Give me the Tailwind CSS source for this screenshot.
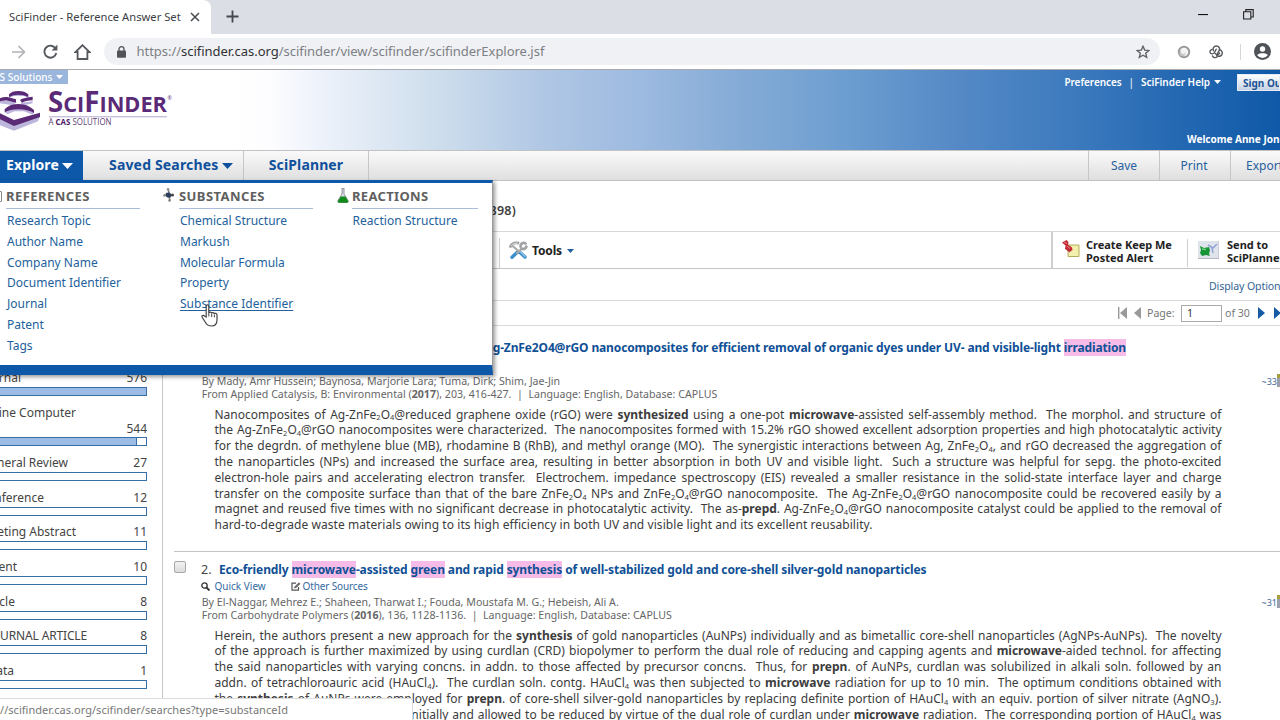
<!DOCTYPE html>
<html lang="en">
<head>
<meta charset="utf-8">
<title>SciFinder - Reference Answer Set</title>
<script src="https://cdn.jsdelivr.net/npm/@tailwindcss/browser@4"></script>
</head>
<body class="relative flex h-[720px] w-[1280px] flex-col overflow-hidden bg-white font-['Noto_Sans',sans-serif] text-xs text-[#444] whitespace-nowrap">

<!-- Browser tabs -->
<div class="flex h-[34px] shrink-0 bg-[#dcdee6]">
  <div class="flex w-[211px] items-center rounded-tr-lg bg-white pl-[9px]">
    <span class="w-[179px] text-[11.2px] tracking-[0.01px] text-[#3c4043]">SciFinder - Reference Answer Set</span>
    <svg class="ml-[2px] h-2.5 w-2.5" viewBox="0 0 10 10" stroke="#45484c" stroke-width="1.5"><path d="M1 1l8 8M9 1l-8 8"/></svg>
  </div>
  <svg class="mt-[10px] ml-[15px] h-[13px] w-[13px]" viewBox="0 0 13 13" stroke="#44474b" stroke-width="1.8"><path d="M6.5 .5v12M.5 6.5h12"/></svg>
  <svg class="mt-[14px] ml-auto h-[2px] w-[10px]" viewBox="0 0 10 2"><path d="M0 .5h10" stroke="#111" stroke-width="1.2"/></svg>
  <svg class="mt-[9px] mr-[26px] ml-[35px] h-[11px] w-[11px]" viewBox="0 0 11 11" fill="none" stroke="#222" stroke-width="1.1"><path d="M.6 2.8h7.2v7.2H.6zM2.8 2.8V.6h7.4v7.4H7.8"/></svg>
</div>

<!-- Address bar -->
<div class="flex h-9 shrink-0 items-center border-b border-[#a9abb0] bg-white">
  <svg class="ml-[11px] h-[14px] w-[15px]" viewBox="0 0 15 14" fill="none" stroke="#b0b2b6" stroke-width="1.6"><path d="M1 7h12.5M7.5 1l6 6-6 6"/></svg>
  <svg class="ml-[17px] h-[15px] w-[15px]" viewBox="0 0 15 15"><path d="M12.600 4.600A6 6 0 1 0 13.300 9" fill="none" stroke="#55585c" stroke-width="1.900"/><path d="M14.400 .6v6H8.600z" fill="#55585c"/></svg>
  <svg class="ml-[15.500px] h-4 w-[17px]" viewBox="0 0 17 16" fill="none" stroke="#55585c" stroke-width="1.800"><path d="M8.500 1.200L1.600 8h2v7h9.800V8h2z"/></svg>
  <div class="ml-[13.500px] flex h-[27px] w-[1056px] items-center rounded-full bg-[#f0f1f4] pr-[10px] pl-[13px]">
    <svg class="h-3 w-[9px]" viewBox="0 0 9 12"><rect y="4.400" width="9" height="7.400" rx="1" fill="#505357"/><path d="M2 5V3.200a2.500 2.500 0 0 1 5 0V5" fill="none" stroke="#505357" stroke-width="1.300"/></svg>
    <span class="ml-[10.500px] text-[13px] tracking-[-0.030px] text-[#7c7f84]">https://<span class="text-[#303236]">scifinder.cas.org</span>/scifinder/view/scifinder/scifinderExplore.jsf</span>
    <svg class="ml-auto h-[14px] w-[14px]" viewBox="0 0 14 14" fill="none" stroke="#606368" stroke-width="1.400"><path d="M7 1.300l1.700 3.800 4.200.4-3.200 2.800 1 4.100L7 10.200l-3.700 2.200 1-4.100L1.100 5.500l4.200-.4z"/></svg>
  </div>
  <svg class="ml-[17px] h-[14px] w-[14px]" viewBox="0 0 14 14"><circle cx="7" cy="7" r="5.200" fill="#f8f8f8" stroke="#9a9a9a" stroke-width="2"/><circle cx="5.500" cy="8.300" r="3" fill="#c6c6c6"/><circle cx="6.200" cy="6.800" r="2.300" fill="#f2f2f2"/></svg>
  <svg class="ml-[18px] h-[14px] w-[14px]" viewBox="0 0 14 14" fill="none" stroke="#54575b" stroke-width="1.400" stroke-linecap="round"><path d="M4.500 5.800C3.200 3 5 1 7.300 1s4 2 3 4.200L8.600 8.300"/><path d="M7.200 4.200L5.500 7.500C4.300 9.500 1.500 9.300 1 7.300c-.3-1.500.8-2.600 2-2.800"/><path d="M3.500 11c.6 1.800 3.600 2.300 4.900.3M6.200 8.400c1 1.600 3.600 1.600 4.400-.4M10.800 4.800c2.300.6 3.200 3.200 1.800 5.200-1.300 1.800-3.800 1.600-4.900.2"/></svg>
  <div class="ml-[17px] h-4 w-px bg-[#d4d6da]"></div>
  <svg class="ml-[13px] h-[17px] w-[17px]" viewBox="0 0 17 17"><circle cx="8.500" cy="8.500" r="8.500" fill="#4f5256"/><circle cx="8.500" cy="6" r="2.700" fill="#fff"/><path d="M3.200 12.300c1-2.600 9.600-2.600 10.600 0a6.600 6.600 0 0 1-10.600 0z" fill="#fff"/></svg>
</div>

<!-- Banner -->
<header class="flex h-20 shrink-0 justify-between overflow-hidden bg-[linear-gradient(90deg,#fff_230px,#fdfdff_270px,#ecf1fa_325px,#cdddec_440px,#b1c8e5_540px,#9dbae0_640px,#84abd6_740px,#6c9dd0_850px,#5489c6_960px,#3b79bd_1080px,#2468b2_1180px,#0f59a8_1280px)]">
  <div class="flex flex-col">
    <div class="flex h-[14px] w-[68px] items-center justify-end bg-[#9ab6dc] pr-[5px] text-[10px] leading-none font-medium tracking-[0.040px] text-white">CAS Solutions
      <svg class="ml-[3.500px] h-1 w-[7px] shrink-0" viewBox="0 0 7 4"><path d="M0 0h7L3.500 4z" fill="#fff"/></svg>
    </div>
    <svg class="mt-[4px] h-[44px] w-[180px]" viewBox="0 0 180 44">
      <g transform="translate(0 -20) scale(.33333)">
        <g fill="#bdb6dc">
          <path d="M28 80l12-6h32l12 6v10l-12-6H40l-12 7zM0 99l14-3 34 8-10 8-38-6zM62 104l36-4v6l-32 7zM14 132l30-14h28l30 14-4 8-26-10H44l-22 9z"/>
          <path d="M0 154l42 18 78-28-6 16-72 28-42-16z"/>
        </g>
        <g fill="#5a2a77">
          <path d="M27 79q8-10 28-10t30 10v8q-16-7-30-7t-28 7z"/>
          <path d="M0 91q10-5 22-4l26 7v10l-30-7-18 3zM60 96q12-8 38-10v11q-22 1-32 7z"/>
          <path d="M14 124q14-16 42-16t46 18v9q-20-11-46-11t-42 9z"/>
          <path d="M0 136l42 20 78-22v13l-78 27-42-20z"/>
        </g>
      </g>
      <text x="48" y="24" textLength="119" lengthAdjust="spacingAndGlyphs" font-family="Open Sans, sans-serif" fill="#5a2a77" font-size="22" font-weight="700"><tspan font-size="28">S</tspan>CI<tspan font-size="28">F</tspan>INDER</text>
      <text x="167.500" y="12" font-family="Open Sans, sans-serif" font-size="5" fill="#5a2a77">®</text>
      <path d="M49 28.800h118" stroke="#b3a9cc" stroke-width="1"/>
      <text x="48.500" y="37.400" textLength="63" lengthAdjust="spacingAndGlyphs" font-family="Open Sans, sans-serif" font-size="8.500" fill="#5d4472">A <tspan font-weight="700" fill="#4b2168">CAS</tspan> SOLUTION</text>
    </svg>
  </div>
  <div class="flex flex-col justify-between pt-[4px] pb-[4px] text-white">
    <div class="flex h-[17px] items-center text-[10px] leading-none font-semibold">
      <span class="mb-[2px] w-[57px] tracking-[-0.050px]">Preferences</span>
      <span class="mr-[7px] mb-[2px] ml-[7px] font-normal">|</span>
      <span class="mb-[2px] tracking-[-0.030px]">SciFinder Help</span>
      <svg class="ml-[4px] mb-[2px] h-1 w-[7px]" viewBox="0 0 7 4"><path d="M0 0h7L3.500 4z" fill="#fff"/></svg>
      <div class="ml-[16px] flex h-[17px] w-[43px] items-center overflow-hidden border border-[#e6ecf5] bg-linear-to-b from-white to-[#c6d2e4] pl-[5px] text-[10px] font-bold text-[#1e5494]">Sign Out</div>
    </div>
    <div class="ml-auto w-[93px] overflow-hidden text-[10px] leading-[14px] font-bold tracking-[-0.020px]">Welcome Anne Jones</div>
  </div>
</header>

<!-- Main navigation -->
<nav class="flex h-[31px] shrink-0 items-stretch border-t border-b border-[#c2c2c2] bg-linear-to-b from-[#fafafa] to-[#dfdfdf] text-[14px] font-bold tracking-[0.130px] text-[#0f519c]">
  <div class="flex w-[83px] items-center bg-[#0d58a9] pl-[6px] text-white">Explore
    <svg class="ml-[3px] h-[6px] w-[11px]" viewBox="0 0 11 6"><path d="M0 0h11L5.500 6z" fill="#fff"/></svg>
  </div>
  <div class="flex w-[161px] items-center border-r border-[#c6c6c6] pl-[26px] tracking-[0.170px]">Saved Searches
    <svg class="ml-[4px] h-[6px] w-[11px]" viewBox="0 0 11 6"><path d="M0 0h11L5.500 6z" fill="#0f519c"/></svg>
  </div>
  <div class="flex w-[125px] items-center justify-center border-r border-[#c6c6c6]">SciPlanner</div>
  <div class="ml-auto flex text-xs font-normal tracking-normal text-[#27609f]">
    <div class="flex w-[71px] items-center justify-center border-l border-[#c6c6c6]">Save</div>
    <div class="flex w-[71px] items-center justify-center border-l border-[#c6c6c6] pr-[2px]">Print</div>
    <div class="flex w-[50px] items-center overflow-hidden border-l border-[#c6c6c6] pl-[15px]">Export</div>
  </div>
</nav>

<!-- Answer set heading -->
<div class="flex h-[51px] shrink-0 items-center border-b border-[#d8d8d8] pt-[10px]">
  <div class="w-[516px] text-right text-[12.500px] font-semibold tracking-[0.250px] text-[#3d3d3d]">References (898)</div>
</div>

<!-- Tool bar -->
<div class="flex h-[37px] shrink-0 items-stretch border-b border-[#c4c4c4] text-[11px] leading-[13px] font-bold text-[#222]">
  <div class="mt-[6px] ml-[499px] flex items-center border-l border-[#cfcfcf] pb-[5px] pl-[9px]">
    <svg class="h-[19px] w-[19px]" viewBox="0 0 19 19" fill="none" stroke-linecap="round">
      <path d="M10 10.500l6 5.500M9 10.500L3 16.300" stroke="#3c8ecb" stroke-width="3.400"/><path d="M10.500 10l5.500 5.500" stroke="#8cc4ea" stroke-width="1.300"/>
      <path d="M3 4.500l7 6M12 8.500l-4 3.500" stroke="#aaa" stroke-width="2.200"/>
      <path d="M1.500 5.500c1-2.500 4-4 7.500-3.500M11.500 5.500c0-3 3-4.500 5-3M12.500 7.500c2 1.200 4.300.2 4.800-1.800" stroke="#a0a3a5" stroke-width="2.800"/>
      <path d="M2.500 4.500c1.500-1.800 3.500-2.300 5.500-2.200" stroke="#ddd" stroke-width="1"/>
    </svg>
    <span class="ml-[4px] text-xs tracking-[-0.150px]">Tools</span>
    <svg class="ml-[5px] h-1 w-[7px]" viewBox="0 0 7 4"><path d="M0 0h7L3.500 4z" fill="#24619f"/></svg>
  </div>
  <div class="ml-auto flex w-[136px] items-center border-l-2 border-[#cfcfcf] pl-[9px]">
    <svg class="mt-[-2px] h-[18px] w-[18px]" viewBox="0 0 18 18"><path d="M6 5h11v11.500H6z" fill="#f3efac" stroke="#b5ad5e"/><path d="M8 12l-2-2" stroke="#666" stroke-width="1.200"/><path d="M0 2.500L4.500 0l2 2-.5 2.500 4 3 .5 2.500-3 2L3 9l.5-3.500z" fill="#c22b36"/><path d="M2 2l3 1.500M5 6l3 2.500" stroke="#ee8288"/></svg>
    <div class="ml-[6px] pt-[2px] tracking-[-0.030px]">Create Keep Me<br>Posted Alert</div>
  </div>
  <div class="mt-[7px] mb-px h-auto w-px bg-[#cfcfcf]"></div>
  <div class="flex w-[92px] items-center overflow-hidden pl-[10px]">
    <svg class="h-[18px] w-[21px] shrink-0" viewBox="0 0 21 18"><path d="M0 0h21v17.500H0z" fill="#dfe3ea"/><path d="M0 17.500h21V0" fill="none" stroke="#b4b8bf"/><path d="M10 4l5 3 4-4M14 7l1 5" fill="none" stroke="#93a3d6" stroke-width="1.500"/><path d="M2 5l4 2 5-1 1 3-1 4 1 2-4-1-4 1-2-3 1-3z" fill="#189436"/><path d="M4 8l4 .5" stroke="#68d07e" stroke-width="1.500"/></svg>
    <div class="ml-[8px] pt-[2px]">Send to<br>SciPlanner</div>
  </div>
</div>
<div class="flex h-8 shrink-0 items-center justify-end border-b border-[#dadada] pt-[3px] text-[#336496]"><span class="w-[71px] overflow-hidden text-[10.600px] tracking-[-0.120px]">Display Options</span></div>
<div class="flex h-[25px] shrink-0 items-center justify-end border-b border-[#dadada] text-[10.600px] text-[#777]">
  <svg class="h-3 w-[9px]" viewBox="0 0 9 12" fill="#999"><path d="M0 0h1.400v12H0zM9 0v12L2 6z"/></svg>
  <svg class="ml-[7px] h-3 w-[7px]" viewBox="0 0 7 12" fill="#999"><path d="M7 0v12L0 6z"/></svg>
  <span class="ml-[6px] w-[27px]">Page:</span>
  <div class="ml-[7px] flex h-[17px] w-[41px] items-center border border-[#aaa] bg-white pl-[5px] text-[#333]">1</div>
  <span class="ml-[3px] w-[25px]">of 30</span>
  <svg class="ml-[8px] h-3 w-[7px]" viewBox="0 0 7 12" fill="#155aa5"><path d="M0 0v12l7-6z"/></svg>
  <svg class="mr-[-1px] ml-[9px] h-3 w-[7px]" viewBox="0 0 7 12" fill="#155aa5"><path d="M0 0v12l7-6z"/></svg>
</div>

<div class="flex min-h-0 flex-1">
  <!-- Document type filter -->
  <aside class="w-[163px] shrink-0 border-r border-[#c9c9c9] pt-[43px] leading-4 text-[#444]">
    <div class="h-[35px] w-[147px]"><div class="flex justify-between pt-px"><div class="flex w-[21px] justify-end overflow-hidden">Journal</div>576</div><div class="mt-px h-[9px] border border-l-0 border-[#376ea6] bg-[#9dbce5]"></div></div>
    <div class="h-[50px] w-[147px] pt-px"><div class="flex w-[76px] justify-end overflow-hidden">Online Computer</div><div class="text-right">544</div><div class="h-[9px] border border-l-0 border-[#376ea6]"><div class="h-full w-[137px] border-r border-[#376ea6] bg-[#9dbce5]"></div></div></div>
    <div class="h-[34.700px] w-[147px]"><div class="flex justify-between pt-px"><div class="flex w-[68px] justify-end overflow-hidden">General Review</div>27</div><div class="mt-px h-[9px] border border-l-0 border-[#376ea6]"></div></div>
    <div class="h-[34.700px] w-[147px]"><div class="flex justify-between pt-px"><div class="flex w-[44px] justify-end overflow-hidden">Conference</div>12</div><div class="mt-px h-[9px] border border-l-0 border-[#376ea6]"></div></div>
    <div class="h-[34.700px] w-[147px]"><div class="flex justify-between pt-px"><div class="flex w-[76px] justify-end overflow-hidden">Meeting Abstract</div>11</div><div class="mt-px h-[9px] border border-l-0 border-[#376ea6]"></div></div>
    <div class="h-[34.700px] w-[147px]"><div class="flex justify-between pt-px"><div class="flex w-[17px] justify-end overflow-hidden">Patent</div>10</div><div class="mt-px h-[9px] border border-l-0 border-[#376ea6]"></div></div>
    <div class="h-[34.700px] w-[147px]"><div class="flex justify-between pt-px"><div class="flex w-[15px] justify-end overflow-hidden">Article</div>8</div><div class="mt-px h-[9px] border border-l-0 border-[#376ea6]"></div></div>
    <div class="h-[34.700px] w-[147px]"><div class="flex justify-between pt-px"><div class="flex w-[87px] justify-end overflow-hidden tracking-[-0.150px]">JOURNAL ARTICLE</div>8</div><div class="mt-px h-[9px] border border-l-0 border-[#376ea6]"></div></div>
    <div class="h-[34.700px] w-[147px]"><div class="flex justify-between pt-px"><div class="flex w-[14px] justify-end overflow-hidden">Data</div>1</div><div class="mt-px h-[9px] border border-l-0 border-[#376ea6]"></div></div>
  </aside>

  <!-- Answers -->
  <main class="flex-1 overflow-hidden pt-[14px] pl-[11px]">
    <article class="pl-[27px]">
      <div class="flex h-4 w-[925px] justify-end leading-4 font-bold tracking-[-0.135px] text-[#0f5096]"><span>Synthesis of Ag-ZnFe2O4@rGO nanocomposites for efficient removal of organic dyes under UV- and visible-light <span class="bg-[#f6bbe6]">irradiation</span></span></div>
      <div class="mt-[18.500px] ml-[0.700px] flex justify-between text-[10.600px] leading-[13px] tracking-[0.018px] text-[#666]"><span>By Mady, Amr Hussein; Baynosa, Marjorie Lara; Tuma, Dirk; Shim, Jae-Jin</span><span class="flex text-[9px] tracking-normal text-[#3f6596]">~33<span class="mt-[-1px] h-[13px] w-[3px] border-t-4 border-[#a79f3c] bg-[#9c9fae]"></span></span></div>
      <div class="ml-[0.700px] text-[10.600px] leading-[13px] tracking-[0.018px] text-[#666]">From Applied Catalysis, B: Environmental (<b>2017</b>), 203, 416-427.&nbsp; |&nbsp; Language: English, Database: CAPLUS</div>
      <div class="mt-[6px] ml-[13.500px] w-[1007px] leading-[15.830px] text-[#3c3c3c] [&_sub]:text-[7.500px]">
        <div class="[text-align-last:justify]">Nanocomposites of Ag-ZnFe<sub>2</sub>O<sub>4</sub>@reduced graphene oxide (rGO) were <b>synthesized</b> using a one-pot <b>microwave</b>-assisted self-assembly method.&nbsp; The morphol. and structure of</div>
        <div class="[text-align-last:justify]">the Ag-ZnFe<sub>2</sub>O<sub>4</sub>@rGO nanocomposites were characterized.&nbsp; The nanocomposites formed with 15.2% rGO showed excellent adsorption properties and high photocatalytic activity</div>
        <div class="[text-align-last:justify]">for the degrdn. of methylene blue (MB), rhodamine B (RhB), and methyl orange (MO).&nbsp; The synergistic interactions between Ag, ZnFe<sub>2</sub>O<sub>4</sub>, and rGO decreased the aggregation of</div>
        <div class="[text-align-last:justify]">the nanoparticles (NPs) and increased the surface area, resulting in better absorption in both UV and visible light.&nbsp; Such a structure was helpful for sepg. the photo-excited</div>
        <div class="[text-align-last:justify]">electron-hole pairs and accelerating electron transfer.&nbsp; Electrochem. impedance spectroscopy (EIS) revealed a smaller resistance in the solid-state interface layer and charge</div>
        <div class="[text-align-last:justify]">transfer on the composite surface than that of the bare ZnFe<sub>2</sub>O<sub>4</sub> NPs and ZnFe<sub>2</sub>O<sub>4</sub>@rGO nanocomposite.&nbsp; The Ag-ZnFe<sub>2</sub>O<sub>4</sub>@rGO nanocomposite could be recovered easily by a</div>
        <div class="[text-align-last:justify]">magnet and reused five times with no significant decrease in photocatalytic activity.&nbsp; The as-<b>prepd</b>. Ag-ZnFe<sub>2</sub>O<sub>4</sub>@rGO nanocomposite catalyst could be applied to the removal of</div>
        <div class="tracking-[0.070px]">hard-to-degrade waste materials owing to its high efficiency in both UV and visible light and its excellent reusability.</div>
      </div>
    </article>
    <div class="mt-[17.500px] h-px bg-[#c4c4c4]"></div>
    <article class="flex">
      <div class="mt-[9px] h-3 w-3 shrink-0 rounded-[2px] border border-[#a9a9a9] bg-linear-to-b from-[#f2f2f2] to-[#dcdcdc]"></div>
      <div class="min-w-0 flex-1 pt-[10px] pl-[15px]">
        <div class="flex h-4 leading-4"><span class="w-[18px] text-[12.500px]">2.</span><span class="font-bold tracking-[-0.110px] text-[#0f5096]">Eco-friendly <span class="bg-[#f6bbe6]">microwave</span>-assisted <span class="bg-[#f6bbe6]">green</span> and rapid <span class="bg-[#f6bbe6]">synthesis</span> of well-stabilized gold and core-shell silver-gold nanoparticles</span></div>
        <div class="mt-px flex h-4 items-center text-[10px] text-[#336a9f]">
          <svg class="h-[9px] w-[9px]" viewBox="0 0 9 9" fill="none" stroke="#333"><circle cx="3.500" cy="3.500" r="2.700" stroke-width="1.300"/><path d="M5.500 5.500L8.500 8.500" stroke-width="1.900"/></svg>
          <span class="ml-[4.500px] w-[76px]">Quick View</span>
          <svg class="h-[9px] w-[10px]" viewBox="0 0 10 9" fill="none" stroke="#555" stroke-width="1.200"><path d="M5 1.200H1v7h6.500V5"/><path d="M3.500 6l1-2L8 .8l1 1L5.500 5.200z" fill="#777" stroke-width=".8"/></svg>
          <span class="ml-[2px] tracking-[-0.130px]">Other Sources</span>
        </div>
        <div class="mt-[1.500px] ml-[0.700px] flex justify-between text-[10.600px] leading-[13px] tracking-[0.018px] text-[#666]"><span>By El-Naggar, Mehrez E.; Shaheen, Tharwat I.; Fouda, Moustafa M. G.; Hebeish, Ali A.</span><span class="flex text-[9px] tracking-normal text-[#3f6596]">~31<span class="mt-[-1px] h-[13px] w-[3px] border-t-4 border-[#a79f3c] bg-[#9c9fae]"></span></span></div>
        <div class="ml-[0.700px] text-[10.600px] leading-[13px] tracking-[0.018px] text-[#666]">From Carbohydrate Polymers (<b>2016</b>), 136, 1128-1136.&nbsp; |&nbsp; Language: English, Database: CAPLUS</div>
        <div class="mt-[5.500px] ml-[13.500px] w-[1007px] leading-[15.830px] text-[#3c3c3c] [&_sub]:text-[7.500px]">
          <div class="[text-align-last:justify]">Herein, the authors present a new approach for the <b>synthesis</b> of gold nanoparticles (AuNPs) individually and as bimetallic core-shell nanoparticles (AgNPs-AuNPs).&nbsp; The novelty</div>
          <div class="[text-align-last:justify]">of the approach is further maximized by using curdlan (CRD) biopolymer to perform the dual role of reducing and capping agents and <b>microwave</b>-aided technol. for affecting</div>
          <div class="[text-align-last:justify]">the said nanoparticles with varying concns. in addn. to those affected by precursor concns.&nbsp; Thus, for <b>prepn</b>. of AuNPs, curdlan was solubilized in alkali soln. followed by an</div>
          <div class="[text-align-last:justify]">addn. of tetrachloroauric acid (HAuCl<sub>4</sub>).&nbsp; The curdlan soln. contg. HAuCl<sub>4</sub> was then subjected to <b>microwave</b> radiation for up to 10 min.&nbsp; The optimum conditions obtained with</div>
          <div class="[text-align-last:justify]">the <b>synthesis</b> of AuNPs were employed for <b>prepn</b>. of core-shell silver-gold nanoparticles by replacing definite portion of HAuCl<sub>4</sub> with an equiv. portion of silver nitrate (AgNO<sub>3</sub>).</div>
          <div class="[text-align-last:justify]">The portion of HAuCl<sub>4</sub> was added initially and allowed to be reduced by virtue of the dual role of curdlan under <b>microwave</b> radiation.&nbsp; The corresponding portion of HAuCl<sub>4</sub> was</div>
        </div>
      </div>
    </article>
  </main>
</div>

<!-- Explore menu -->
<div class="absolute top-[180px] left-0 flex h-[195px] w-[493px] border-t-[3px] border-r border-b-[10px] border-t-[#0d58a9] border-r-[#999] border-b-[#0d58a9] bg-white text-[#235f9c] shadow-[2px_2px_4px_rgba(0,0,0,0.4)]">
  <div class="relative w-[173px] pl-[6px]">
    <div class="absolute top-[8px] left-[-8px] h-[11px] w-[10px] rounded-[1px] border border-[#888] bg-white"></div>
    <div class="w-[134px] border-b border-[#a9bcdc] pt-[4px] pb-[2px] text-[13px] leading-[19px] font-bold tracking-[0.440px] text-[#606060]">REFERENCES</div>
    <div class="mt-[2px] pl-[1px] leading-[20.750px]"><div>Research Topic</div><div>Author Name</div><div>Company Name</div><div>Document Identifier</div><div>Journal</div><div>Patent</div><div>Tags</div></div>
  </div>
  <div class="relative w-[173px] pl-[6px]">
    <svg class="absolute top-[5px] left-[-10px] h-[14px] w-[11px]" viewBox="0 0 11 14"><path d="M5 0l1 5M1 7h9M6 8l1 5M3 5l5 4" stroke="#777" stroke-width="1.500"/><circle cx="5.500" cy="7" r="2.600" fill="#2b3c5c"/><circle cx="1.500" cy="7.500" r="1.300" fill="#888"/><circle cx="9.500" cy="7" r="1.500" fill="#444"/><circle cx="5" cy="1.500" r="1.300" fill="#999"/><circle cx="6.500" cy="12.500" r="1.300" fill="#888"/></svg>
    <div class="w-[134px] border-b border-[#a9bcdc] pt-[4px] pb-[2px] text-[13px] leading-[19px] font-bold tracking-[0.420px] text-[#606060]">SUBSTANCES</div>
    <div class="mt-[2px] pl-[1px] leading-[20.750px]"><div>Chemical Structure</div><div>Markush</div><div class="tracking-[-0.080px]">Molecular Formula</div><div>Property</div><div class="underline underline-offset-2">Substance Identifier</div></div>
  </div>
  <div class="relative pl-[6px]">
    <svg class="absolute top-[5px] left-[-9.500px] h-[15px] w-[12px]" viewBox="0 0 12 15"><path d="M4.500 .5h3M5 1v5L1 12.500c-.5 1.500 0 2 1.500 2h7c1.500 0 2-.5 1.500-2L7 6V1" fill="#dde" stroke="#888" stroke-width=".9"/><path d="M3.800 8.500h4.600l2.800 4.500c.3 1.200-.2 1.700-1.500 1.700H2.400c-1.300 0-1.800-.5-1.500-1.700z" fill="#138a1c"/></svg>
    <div class="w-[126px] border-b border-[#a9bcdc] pt-[4px] pb-[2px] text-[13px] leading-[19px] font-bold tracking-[0.340px] text-[#606060]">REACTIONS</div>
    <div class="mt-[2px] pl-[0.500px] leading-[20.750px] tracking-[0.050px]">Reaction Structure</div>
  </div>
</div>

<!-- Pointer -->
<svg class="absolute top-[304px] left-[201px] h-[23px] w-[18px]" viewBox="0 0 18 23"><path d="M5.200 13V2.300c0-2 2.600-2 2.600 0V9c.2-1.300 2.700-1.300 2.900.3.3-1.200 2.500-1 2.700.6.4-1 2.600-.8 2.600 1.100v5c0 3.500-1.800 6-5.500 6-3.500 0-4.600-1-6-3.500l-3.200-5c-1-1.800 1-2.800 2.200-1.500z" fill="#fff" stroke="#444" stroke-width="1.200"/><path d="M7.800 9v3.500M10.700 9.500V13M13.400 10.500v2.800" stroke="#444"/></svg>

<!-- Link status -->
<div class="absolute bottom-0 left-0 flex h-[22px] w-[413px] items-center overflow-hidden rounded-tr-[3px] border-t border-r border-[#dcdcdc] bg-white pt-px text-[11px] tracking-[0.040px] text-[#777]">//scifinder.cas.org/scifinder/searches?type=substanceId</div>
</body>
</html>
